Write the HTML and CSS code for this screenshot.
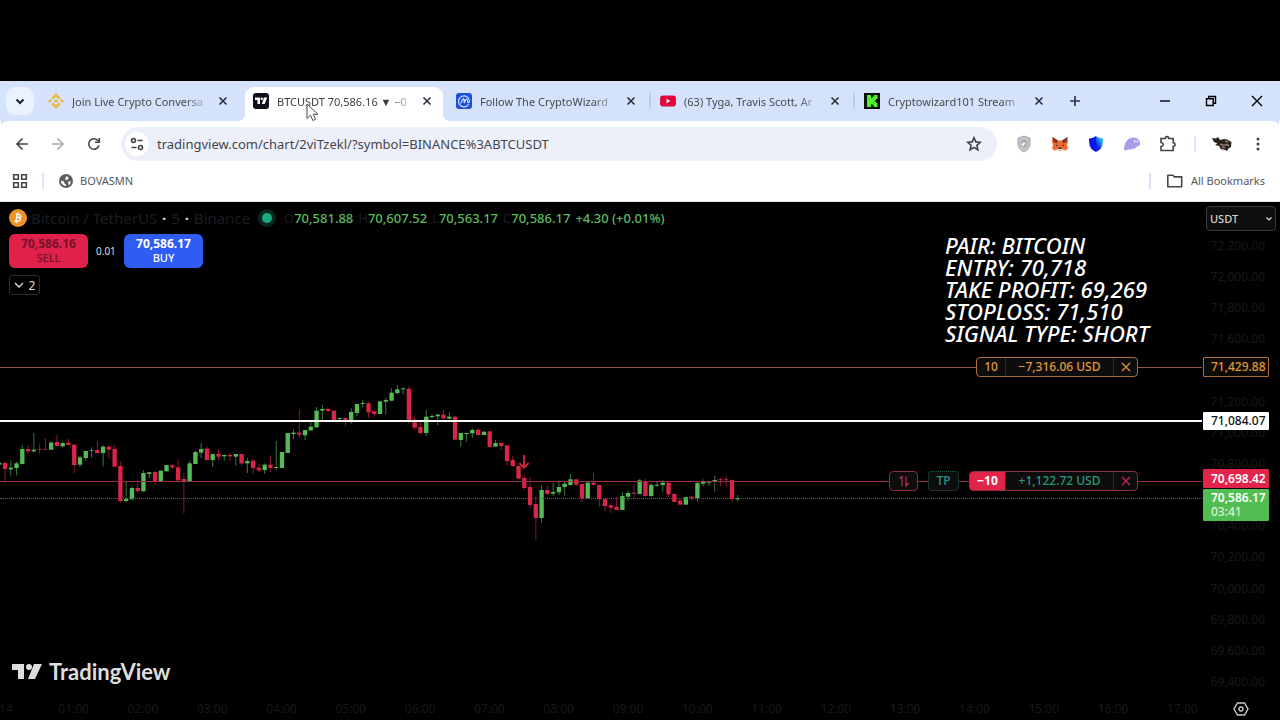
FILE: index.html
```html
<!DOCTYPE html>
<html lang="en">
<head>
<meta charset="utf-8">
<title>BTCUSDT 70,586.16</title>
<link rel="stylesheet" href="styles.css">
</head>
<body>
<header class="browser">
  <div class="tabstrip">
    <button class="tab-search" aria-label="Search tabs"><svg width="16" height="16" viewBox="0 0 16 16"><path d="M4.500 6.500 8 10l3.500-3.500" fill="none" stroke="#1f1f1f" stroke-width="2"/></svg></button>
    <nav class="tabs">
      <div class="tab">
        <svg class="fav" viewBox="0 0 16 16"><g fill="#eeb63c"><path d="M8 0l4.700 4.700-1.900 1.900L8 3.800 5.200 6.600 3.300 4.700z"/><path d="M8 16l4.700-4.700-1.900-1.900L8 12.200 5.200 9.400l-1.900 1.900z"/><path d="M2 6l2 2-2 2-2-2zM14 6l2 2-2 2-2-2zM8 5.900 10.100 8 8 10.100 5.900 8z"/></g></svg>
        <a href="#" class="tab-title">Join Live Crypto Conversa</a>
        <button class="tab-close" aria-label="Close tab"><svg width="16" height="16" viewBox="0 0 16 16"><path d="M4.500 4.500l7 7m0-7-7 7"/></svg></button>
      </div>
      <div class="tab active">
        <svg class="fav" viewBox="0 0 16 16"><rect width="16" height="16" rx="3" fill="#0d101c"/><path d="M2 4.500h5V11H4.500V7H2zM11 4.500h3.300L11.600 11H8.800z" fill="#fff"/><circle cx="8.800" cy="5.700" r="1.200" fill="#fff"/></svg>
        <a href="#" class="tab-title">BTCUSDT 70,586.16 ▼ −0</a>
        <button class="tab-close" aria-label="Close tab"><svg width="16" height="16" viewBox="0 0 16 16"><path d="M4.500 4.500l7 7m0-7-7 7"/></svg></button>
      </div>
      <div class="tab">
        <svg class="fav" viewBox="0 0 16 16"><rect width="16" height="16" rx="3" fill="#1d4fdd"/><path d="M12.700 11.200A5.500 5.500 0 1 1 13.500 8c0 1.900-2 2-2 .3 0-2.600-1.300-2.700-2.200-.8L8.200 10V6.800c-.7-1.600-1.300-.8-1.700.1L4.800 10" fill="none" stroke="#cfe0ff" stroke-width="1.200" stroke-linecap="round"/></svg>
        <a href="#" class="tab-title">Follow The CryptoWizard</a>
        <button class="tab-close" aria-label="Close tab"><svg width="16" height="16" viewBox="0 0 16 16"><path d="M4.500 4.500l7 7m0-7-7 7"/></svg></button>
      </div>
      <div class="tab divided">
        <svg class="fav" viewBox="0 0 16 16"><rect y="2.500" width="16" height="11" rx="3" fill="#e2063c"/><path d="M6.500 5.700v4.600l4-2.300z" fill="#fff"/></svg>
        <a href="#" class="tab-title">(63) Tyga, Travis Scott, Ar</a>
        <button class="tab-close" aria-label="Close tab"><svg width="16" height="16" viewBox="0 0 16 16"><path d="M4.500 4.500l7 7m0-7-7 7"/></svg></button>
      </div>
      <div class="tab divided">
        <svg class="fav" viewBox="0 0 16 16"><path d="M0 0h16v16H0z" fill="#071007"/><path d="M3 2h4v3h1.500V3.500H10V2h3.500v4H12v1.500h-1.500v1H12V10h1.500v4H10v-1.500H8.500V11H7v3H3z" fill="#4df22c"/></svg>
        <a href="#" class="tab-title">Cryptowizard101 Stream</a>
        <button class="tab-close" aria-label="Close tab"><svg width="16" height="16" viewBox="0 0 16 16"><path d="M4.500 4.500l7 7m0-7-7 7"/></svg></button>
      </div>
    </nav>
    <button class="new-tab" aria-label="New tab"><svg width="16" height="16" viewBox="0 0 16 16"><path d="M8 3v10M3 8h10" stroke="#303a46" stroke-width="1.700"/></svg></button>
    <div class="window-controls">
      <button aria-label="Minimize"><svg width="12" height="12" viewBox="0 0 12 12"><path d="M1 6h10"/></svg></button>
      <button aria-label="Restore"><svg width="12" height="12" viewBox="0 0 12 12"><path d="M1.500 3.800h6.700v6.700H1.500zM3.700 3.500V1.500h6.800v6.800H8.500"/></svg></button>
      <button aria-label="Close window"><svg width="12" height="12" viewBox="0 0 12 12"><path d="M1 1l10 10M11 1 1 11"/></svg></button>
    </div>
  </div>
  <div class="toolbar">
    <button aria-label="Back"><svg width="16" height="16" viewBox="0 0 16 16"><path d="M14 8H3m5.500-5.500L3 8l5.500 5.500"/></svg></button>
    <button class="off" aria-label="Forward"><svg width="16" height="16" viewBox="0 0 16 16"><path d="M2 8h11M7.500 2.500 13 8l-5.500 5.500"/></svg></button>
    <button aria-label="Reload"><svg width="16" height="16" viewBox="0 0 16 16"><path d="M13 9.200A5.200 5.200 0 1 1 12.200 5M13.300 2v4.300H9"/></svg></button>
    <div class="omnibox">
      <button class="site-info" aria-label="View site information"><svg width="16" height="16" viewBox="0 0 16 16"><circle cx="4.500" cy="4.500" r="2"/><path d="M8.500 4.500h5M2.500 11.500h5"/><circle cx="11.500" cy="11.500" r="2"/></svg></button>
      <input class="url" aria-label="Address" value="tradingview.com/chart/2viTzekl/?symbol=BINANCE%3ABTCUSDT">
      <button class="star" aria-label="Bookmark this tab"><svg width="16" height="16" viewBox="0 0 16 16"><path d="M8 1.700l1.800 4.200 4.500.4-3.400 3 1 4.500L8 11.400l-3.900 2.400 1-4.500-3.400-3 4.500-.4z"/></svg></button>
    </div>
    <div class="extensions">
      <button aria-label="Shield extension"><svg width="16" height="18" viewBox="0 0 16 18"><path d="M8 1 14 3v6c0 4-3 6.500-6 8-3-1.500-6-4-6-8V3z" fill="#c4c5cb" stroke="#a5a7af" stroke-width="1"/><circle cx="8" cy="8.500" r="3.500" fill="#eee" stroke="#9a9ca5"/><path d="M6 8.500a2 2 0 1 1 2 2" fill="none" stroke="#7f828b"/></svg></button>
      <button aria-label="Wallet extension"><svg width="18" height="18" viewBox="0 0 18 18"><path d="M1.500 2 7 5.500h4L16.500 2 17 7l-1 3 1 3-2 2.500-3.500-1L10 16H8l-1.500-1.500-3.500 1L1 13l1-3-1-3z" fill="#ef6a33"/><path d="M1.500 2 7 5.500 6 8.500 2.500 7zM16.500 2 11 5.500l1 3L15.500 7z" fill="#7d3826"/><path d="M7 13h4v2.500H7z" fill="#f2d9c8"/><path d="M5 9.500l2 1.500H5zM13 9.500 11 11h2zM7.500 12.500h3v1.500h-3z" fill="#28242a"/></svg></button>
      <button aria-label="Trust extension"><svg width="16" height="18" viewBox="0 0 16 18"><path d="M8 1v16C3 14.500 1 12.500 1 3.500 4 3.200 6 2.500 8 1z" fill="#0b13f0"/><path d="M8 1v16c5-2.500 7-4.500 7-13.500C12 3.200 10 2.500 8 1z" fill="url(#trust)"/><defs><linearGradient id="trust" x1="1" y1="0" x2=".3" y2="1"><stop offset="0" stop-color="#1ce0a3"/><stop offset=".35" stop-color="#28a8f5"/><stop offset=".8" stop-color="#1020f2"/></linearGradient></defs></svg></button>
      <button aria-label="Phantom extension"><svg width="18" height="18" viewBox="0 0 18 18"><path d="M1 13.500C1.500 7 5.500 2.500 10.500 2.500c4 0 6.500 2.400 6.500 5.500 0 2.700-1.700 4-4 3.700-.9 2-2 2.900-3.200 1.500-1.800 1.700-3.200 2-3.800.8C3.500 16 1 16 1 13.500z" fill="#a99bea"/><path d="M11.700 5.500v2M14.500 5.500v2" stroke="#fff" stroke-width="1.300"/></svg></button>
      <button aria-label="Extensions"><svg class="line" width="18" height="18" viewBox="0 0 18 18"><path d="M2 3.500h4.300C6.300 1 9.700 1 9.700 3.500h4.500v4.300c2.500 0 2.500 3.400 0 3.400v4.300H2v-4c3-.6 3-3.400 0-4z"/></svg></button>
    </div>
    <span class="rule"></span>
    <button class="profile" aria-label="Profile"><svg width="20" height="18" viewBox="0 0 20 18"><path d="M7 13.500q4 5 9 0l-1-3H8z" fill="#e4e2e0"/><path d="M0 3l4 .5L6 2l2 3 4-1 3 .5 4.500 2.500-.5 5-2.500 1.500L15 16l-3-1.500L9 14l-2-3-4-1 2.500-1.500L2 7z" fill="#28221f"/><path d="M8 9l4 1.500 3-1 2 1.500M13 6l3 1M10 12l3 1" stroke="#8f7769" fill="none"/></svg></button>
    <button class="more" aria-label="Menu"><svg width="16" height="16" viewBox="0 0 16 16"><g fill="#3d4045"><circle cx="8" cy="3" r="1.500"/><circle cx="8" cy="8" r="1.500"/><circle cx="8" cy="13" r="1.500"/></g></svg></button>
  </div>
  <div class="bookmarks">
    <button class="apps" aria-label="Tab groups"><svg width="16" height="16" viewBox="0 0 16 16"><path d="M1.700 1.700h4.600v4.600H1.700zM9.700 1.700h4.600v4.600H9.700zM1.700 9.700h4.600v4.600H1.700zM9.700 9.700h4.600v4.600H9.700z"/></svg></button>
    <span class="rule"></span>
    <a class="bookmark" href="#"><svg width="14" height="14" viewBox="0 0 14 14"><circle cx="7" cy="7" r="7" fill="#5b5e62"/><path d="M2 6.500l3 1 .5 2 1.500 1V12a5 5 0 0 1-5-5.500zM7.500 2l2 1.500-.5 2-2 .5L6 5zM9 7.500h2.700c0 2-1 3.200-2 3.800z" fill="#fff"/></svg>BOVASMN</a>
    <span class="rule push"></span>
    <a class="bookmark all" href="#"><svg width="18" height="14" viewBox="0 0 18 14"><path d="M1.800 1.200h5l1.700 1.700h7.200v9.900H1.800z" fill="none" stroke="#43474b" stroke-width="1.600" stroke-linejoin="round"/></svg>All Bookmarks</a>
  </div>
  <svg class="cursor" width="14" height="20" viewBox="0 0 14 20"><path d="M1 1v14.500l3.500-3.300 2.300 5.300 2.700-1.200-2.300-5h4.800z" fill="#fff" stroke="#4a4a4a"/></svg>
</header>

<main class="chart">
  <section class="plot">
    <svg class="candles" id="candles" width="760" height="170" viewBox="0 0 2280 510"></svg>
    <div class="level stop"><span class="chip"><span class="qty">10</span><span class="pnl">−7,316.06 USD</span><button aria-label="Cancel order"><svg width="10" height="10" viewBox="0 0 10 10"><path d="M1 1l8 8M9 1 1 9"/></svg></button></span></div>
    <div class="level mark"></div>
    <div class="level position">
      <button class="chip flip" aria-label="Reverse position"><svg width="12" height="12" viewBox="0 0 12 12"><path d="M1.500 3.500 4 1.500v9.500M8 1.500V11l2.500-3"/></svg></button>
      <button class="chip tp">TP</button>
      <span class="chip"><span class="qty">−10</span><span class="pnl">+1,122.72 USD</span><button aria-label="Close position"><svg width="10" height="10" viewBox="0 0 10 10"><path d="M1 1l8 8M9 1 1 9"/></svg></button></span>
    </div>
    <div class="level last"></div>

    <div class="legend">
      <svg width="18" height="18" viewBox="0 0 18 18"><circle cx="9" cy="9" r="9" fill="#ee9426"/><path d="M6.800 12.800 8.200 5.200l2 .4c2.300.5 1.800 3.100-.5 2.900l-2-.3 2 .4c2.700.6 2 3.700-.6 3.500l-2.900-.5M5.500 12.200l1.600.3M6.800 4.900l1.700.4M9 5.200l.3-1.600M7.600 14.200l.3-1.600" fill="none" stroke="#fff" stroke-width="1.300"/></svg>
      <h1 class="symbol">Bitcoin / TetherUS <b>·</b> 5 <b>·</b> Binance</h1>
      <span class="status"></span>
      <div class="values">
        <span><i>O</i>70,581.88</span>
        <span><i>H</i>70,607.52</span>
        <span><i>L</i>70,563.17</span>
        <span><i>C</i>70,586.17</span>
        <span>+4.30 (+0.01%)</span>
      </div>
    </div>
    <div class="trade">
      <button class="sell"><strong>70,586.16</strong>SELL</button>
      <span class="spread">0.01</span>
      <button class="buy"><strong>70,586.17</strong>BUY</button>
    </div>
    <button class="indicators" aria-label="Show indicators"><svg width="10" height="6" viewBox="0 0 10 6"><path d="M1 1l4 4 4-4"/></svg>2</button>

    <p class="note">PAIR: BITCOIN<br>ENTRY: 70,718<br>TAKE PROFIT: 69,269<br>STOPLOSS: 71,510<br>SIGNAL TYPE: SHORT</p>

    <div class="brand"><svg width="30" height="16" viewBox="0 0 30 16"><path d="M0 0h12v15H6V6H0zM22 0h8l-7 15h-7z"/><circle cx="17" cy="3" r="3"/></svg>TradingView</div>
  </section>

  <aside class="scale">
    <select class="currency" aria-label="Currency"><option>USDT</option></select>
    <svg class="caret" width="6" height="4" viewBox="0 0 6 4"><path d="M.5.500 3 3 5.500.500"/></svg>
    <div class="ticks">
      <span>72,200.00</span><span>72,000.00</span><span>71,800.00</span><span>71,600.00</span><span></span><span>71,200.00</span><span>71,000.00</span><span>70,800.00</span><span></span><span>70,400.00</span><span>70,200.00</span><span>70,000.00</span><span>69,800.00</span><span>69,600.00</span><span>69,400.00</span>
    </div>
    <span class="tag tag-stop">71,429.88</span>
    <span class="tag tag-mark">71,084.07</span>
    <span class="tag tag-position">70,698.42</span>
    <span class="tag tag-last">70,586.17<small>03:41</small></span>
  </aside>

  <footer class="timeline">
    <span class="day">14</span>
    <div class="hours"><span>01:00</span><span>02:00</span><span>03:00</span><span>04:00</span><span>05:00</span><span>06:00</span><span>07:00</span><span>08:00</span><span>09:00</span><span>10:00</span><span>11:00</span><span>12:00</span><span>13:00</span><span>14:00</span><span>15:00</span><span>16:00</span><span>17:00</span></div>
    <button class="settings" aria-label="Chart settings"><svg width="16" height="14" viewBox="0 0 16 14"><path d="M4.500 1h7L15 7l-3.500 6h-7L1 7z"/><circle cx="8" cy="7" r="2"/></svg></button>
  </footer>
</main>
<script src="candles.js"></script>
</body>
</html>
```
FILE: styles.css
```css
* { box-sizing: border-box; }
body { margin: 0; min-height: 100vh; padding-top: 81px; display: flex; flex-direction: column; background: #000; font-family: "Noto Sans", sans-serif; overflow-x: hidden; }
button { border: 0; padding: 0; background: none; font: inherit; color: inherit; display: flex; align-items: center; justify-content: center; }
a { color: inherit; text-decoration: none; }

.browser { position: relative; background: #fff; border-bottom: 1px solid #e3e5e8; color: #474b50; }
.tabstrip { display: flex; height: 40px; background: #d5e2fc; padding: 6px 0 0 6px; }
.tab-search { width: 28px; height: 28px; border-radius: 9px; background: #ebf2ff; margin-right: 7px; }
.tabs { display: flex; flex: 0 1 1020px; min-width: 0; }
.tab { position: relative; flex: 1 1 204px; min-width: 0; display: flex; align-items: center; gap: 8px; padding: 0 14px 6px 7px; font-size: 11px; }
.tab.active { color: #3b3e42; padding-left: 8px; }
.tab.active::before { content: ""; position: absolute; z-index: 0; inset: 0 6px 0 0; background: #fff; border-radius: 9px 9px 0 0; }
.tab.active::after { content: ""; position: absolute; bottom: 0; left: -8px; right: -2px; height: 8px; background: radial-gradient(circle at 0 0, #d5e2fc 8px, #fff 8px) left / 8px 8px no-repeat, radial-gradient(circle at 100% 0, #d5e2fc 8px, #fff 8px) right / 8px 8px no-repeat; }
.tab > * { position: relative; z-index: 1; }
.tab.divided::before { content: ""; position: absolute; left: -4px; top: 6px; width: 2px; height: 16px; background: #b5cdf3; }
.fav { width: 16px; height: 16px; flex: none; }
.tab-title { flex: 1; min-width: 0; overflow: hidden; white-space: nowrap; line-height: 16px; padding-top: 2px; -webkit-mask-image: linear-gradient(90deg, #000 84%, rgba(0,0,0,.15)); mask-image: linear-gradient(90deg, #000 84%, rgba(0,0,0,.15)); }
.tab-close svg { fill: none; stroke: #202a36; stroke-width: 1.5; }
.new-tab { width: 28px; height: 28px; }
.window-controls { display: flex; margin-left: auto; height: 28px; }
.window-controls button { width: 46px; }
.window-controls svg { fill: none; stroke: #000; stroke-width: 1.4; }

.toolbar { display: flex; align-items: center; gap: 8px; height: 45px; padding: 0 8px; background: #fff; border-radius: 8px 8px 0 0; box-shadow: 0 -8px 0 -1px #d5e2fc; position: relative; clip-path: inset(0); }
.toolbar > button, .extensions button { width: 28px; height: 28px; }
.toolbar > button > svg, .omnibox svg, .extensions .line, .apps svg { fill: none; stroke: #404348; stroke-width: 1.6; }
.toolbar .profile svg, .toolbar .more svg { stroke: none; }
.toolbar > .off svg { stroke: #a7aaae; }
.omnibox { flex: 1; display: flex; align-items: center; height: 34px; margin: 0 5px; padding: 0 15px 0 4px; border-radius: 17px; background: #edf0fb; }
.site-info { width: 24px; height: 24px; border-radius: 12px; background: #fff; margin-right: 8px; }
.url { flex: 1; min-width: 0; border: 0; padding: 0; background: none; font: 13px "Noto Sans", sans-serif; color: #42464c; outline: 0; }
.extensions { display: flex; gap: 8px; }
.rule { width: 2px; height: 16px; background: #dbe2f7; }
.toolbar .rule { margin: 0 4px; }
.bookmarks { display: flex; align-items: center; height: 35px; padding: 0 15px 5px 12px; font-size: 11px; color: #54585d; }
.bookmarks .rule { margin: 0 15px 0 14px; }
.bookmarks .push { margin-left: auto; }
.bookmark { display: flex; align-items: center; gap: 7px; line-height: 20px; }
.cursor { position: absolute; left: 306px; top: 22px; z-index: 3; }

.chart { flex: 1; display: grid; grid-template-columns: 1fr 78px; grid-template-rows: minmax(494px, 1fr) 24px; color: #dcdcdc; }
.plot { position: relative; overflow: hidden; padding: 7px 0 0 9px; }
.candles { position: absolute; left: 0; top: 174px; }
.candles .up { fill: #55bb56; }
.candles .down { fill: #d9254a; }
.candles .wick { opacity: .65; }
.candles .signal { fill: none; stroke: #c8243c; stroke-width: 6; }

.level { position: absolute; left: 0; right: 0; display: flex; align-items: center; justify-content: flex-end; gap: 10px; height: 20px; padding-right: 64px; font-size: 12px; font-weight: 500; }
.level::before { content: ""; position: absolute; left: 0; right: 0; top: 10px; border-top: 1px solid var(--line); }
.stop { top: 155px; --line: #94573f; --edge: #a8713a; color: #e29a37; }
.mark { top: 208px; --line: #fff; }
.mark::before { border-top-width: 2px; }
.position { top: 269px; --line: #9a3049; --edge: #8f2b43; color: #c22d4d; }
.last { top: 286px; }
.last::before { border-top: 1px dotted #526052; }
.chip { position: relative; display: flex; height: 20px; line-height: 18px; border: 1px solid var(--edge); border-radius: 4px; background: #0d0d0d; overflow: hidden; }
.qty { width: 29px; text-align: center; border-right: 1px solid #2a2a2a; }
.pnl { width: 108px; text-align: center; border-right: 1px solid #2a2a2a; }
.chip > button { width: 23px; }
.chip svg { fill: none; stroke: currentColor; stroke-width: 1.2; }
.position .pnl, .tp { color: #279b7c; }
.position .qty { width: 36px; background: #e2244b; color: #fff; font-weight: 700; }
.flip { width: 29px; }
.tp { width: 31px; border: 1px dotted #23614f; }

.legend { position: relative; display: flex; align-items: center; gap: 12px; height: 18px; white-space: nowrap; font-size: 13px; font-weight: 500; }
.symbol { margin: 0 0 0 -8px; font: 15px "Noto Sans", sans-serif; color: #1d1d1f; }
.symbol b { margin: 0 1px; color: #ddd; }
.status { width: 10px; height: 10px; border-radius: 5px; background: #1da982; box-shadow: 0 0 0 4px #07291f; }
.values { display: flex; gap: 5px; color: #5cba5e; }
.values i { font-style: normal; font-weight: 400; color: #1b1d1b; }
.trade { position: relative; display: flex; align-items: center; gap: 8px; margin-top: 7px; }
.trade button { width: 79px; height: 34px; padding-bottom: 2px; flex-direction: column; border-radius: 6px; font-size: 11px; line-height: 13px; font-weight: 500; }
.trade strong { font-size: 12px; font-weight: 700; line-height: 14px; }
.sell { background: #e0224a; color: #76122a; }
.buy { background: #2f5df4; color: #fff; }
.spread { font-size: 10px; width: 20px; }
.indicators { position: relative; gap: 5px; width: 31px; height: 20px; margin-top: 7px; border: 1px solid #2b2b2b; border-radius: 3px; font-size: 12px; }
.indicators svg { fill: none; stroke: #ddd; stroke-width: 1.4; }
.note { position: absolute; right: 53px; top: 32px; margin: 0; font-size: 22px; line-height: 22px; font-style: italic; font-weight: 500; color: #fff; }
.brand { position: absolute; left: 12px; bottom: 11px; display: flex; align-items: center; gap: 7px; font: 700 22px/26px Lato, sans-serif; color: #dedede; }
.brand svg { fill: #dedede; }

.scale { position: relative; padding: 4px 4px 0; }
.currency { display: block; width: 70px; height: 25px; padding: 0 3px; appearance: none; border: 1px solid #3a3a3a; border-radius: 4px; background: #0e0e0e; color: #d5d5d5; font: 500 11px "Noto Sans", sans-serif; }
.caret { position: absolute; right: 8px; top: 15px; fill: none; stroke: #ddd; stroke-width: 1.2; }
.ticks { position: absolute; inset: 36px 15px 6px 0; display: flex; flex-direction: column; justify-content: space-between; text-align: right; font-size: 12px; color: #18181a; }
.ticks span { height: 16px; line-height: 16px; }
.tag { position: absolute; left: 1px; width: 66px; padding: 0 4px 0 8px; font-size: 12px; line-height: 18px; font-weight: 500; border-radius: 1px; }
.tag-stop { top: 155px; border: 1px solid #a8713a; padding-left: 7px; color: #e29a37; background: #0d0a05; }
.tag-mark { top: 210px; background: #fff; color: #111; }
.tag-position { top: 267px; line-height: 19px; background: #e2244b; color: #fff; font-weight: 600; }
.tag-last { top: 287px; padding-top: 2px; padding-bottom: 2px; line-height: 14px; background: #52bd53; color: #fff; font-weight: 600; }
.tag small { display: block; font-size: 12px; font-weight: 500; color: #d6f2d6; }

.timeline { grid-column: 1 / -1; display: flex; align-items: center; padding-top: 2px; font-size: 12px; line-height: 16px; color: #18181a; }
.day { width: 40px; margin-left: -1px; }
.hours { flex: 1; display: grid; grid-template-columns: repeat(17, 1fr); text-align: center; }
.settings { width: 16px; margin: 0 31px 0 16px; }
.settings svg { fill: none; stroke: #c9c9c9; stroke-width: 1.4; }
```
FILE: candles.js
```js
// Each row: direction, high, body top, body bottom, low
const rows = `U 255 260 266 268
D 255 261 279 316
U 253 275 280 299
U 257 262 276 298
U 208 219 264 264
D 207 219 226 234
U 171 221 226 229
D 203 219 221 234
D 188 219 221 222
U 195 200 221 222
D 177 198 210 211
U 196 201 211 215
D 188 200 207 208
D 205 206 267 291
U 240 244 266 273
U 223 225 246 255
U 214 223 225 245
D 196 222 231 232
U 207 212 231 271
D 207 212 221 247
D 207 219 272 273
D 257 270 375 379
U 318 369 375 379
U 332 336 370 371
D 311 336 345 349
U 283 291 346 347
U 288 289 294 306
D 283 288 318 325
U 283 284 316 317
U 266 267 286 287
D 263 268 274 279
D 250 274 313 318
D 292 309 317 412
U 254 262 316 316
U 225 228 264 264
U 200 219 230 247
D 212 218 252 254
U 234 234 252 273
D 221 234 242 254
U 236 237 241 255
D 231 237 241 255
U 234 234 242 269
D 234 234 262 269
U 246 255 262 291
D 249 254 276 292
D 263 275 283 288
U 262 266 282 294
D 238 266 276 289
U 195 273 276 283
U 227 228 276 276
U 171 171 231 231
U 161 170 174 189
D 101 170 176 186
U 162 162 178 192
U 136 152 163 165
U 93 104 154 155
U 86 99 104 138
D 94 99 105 110
D 102 104 132 138
U 125 126 129 136
D 126 126 136 150
U 97 108 138 143
U 83 84 111 121
U 72 81 84 94
D 76 82 109 126
D 105 106 114 122
U 75 76 114 114
U 66 72 77 114
U 37 50 74 76
U 27 40 51 56
U 37 37 40 56
D 30 38 135 143
D 118 131 155 162
D 134 153 171 174
U 103 122 171 180
U 114 120 123 128
U 114 116 121 147
D 101 116 127 135
U 108 122 128 129
D 120 122 191 193
U 171 171 192 212
U 170 171 174 197
U 157 162 172 185
D 157 161 177 177
U 165 167 177 177
D 165 166 213 213
U 192 201 212 213
D 200 201 210 222
D 206 208 255 269
D 239 252 270 273
D 266 270 308 311
D 296 306 336 341
D 305 333 387 396
D 361 384 426 491
U 328 342 426 441
D 328 342 354 356
U 320 348 353 360
U 313 333 349 357
U 316 323 333 359
U 294 310 327 328
D 309 310 326 329
D 324 324 367 378
U 318 320 367 367
D 291 320 327 328
D 326 327 369 392
D 368 369 390 406
D 380 388 395 411
D 362 393 402 402
U 349 360 402 402
U 344 351 362 374
D 325 350 353 367
U 309 313 354 354
D 308 315 360 362
U 321 327 360 363
U 318 326 329 333
U 313 320 327 347
D 319 320 355 364
D 352 354 378 378
D 367 374 386 386
U 362 363 386 386
D 360 362 367 375
U 318 321 367 378
U 310 318 323 330
U 317 318 320 330
U 300 312 316 347
D 305 309 311 330
D 300 309 311 332
D 311 312 369 378
U 357 366 370 375`.split("\n");

const STEP = 17.31;
const BODY = 13;
let markup = "";
rows.forEach((row, i) => {
  const [dir, ...prices] = row.split(" ");
  const [high, top, bottom, low] = prices.map(Number);
  const x = 15 + STEP * (i - 1);
  const cls = dir === "U" ? "up" : "down";
  markup += `<rect class="${cls} wick" x="${x - 1.5}" y="${high}" width="3" height="${low - high}"/>`;
  markup += `<rect class="${cls}" x="${x - BODY / 2}" y="${top}" width="${BODY}" height="${bottom - top}"/>`;
});
markup += '<path class="signal" d="M1572 237v38m-14-14 14 14 14-14"/>';
document.getElementById("candles").innerHTML = markup;
```
